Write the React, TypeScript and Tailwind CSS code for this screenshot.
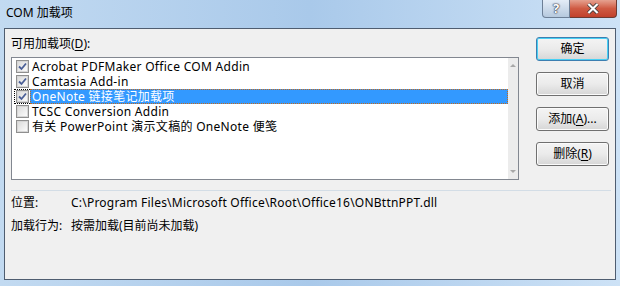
import React from "react";

const font = { fontFamily: '"Noto Sans", "Noto Sans CJK SC", sans-serif' };

const addins = [
  { name: "Acrobat PDFMaker Office COM Addin", checked: true },
  { name: "Camtasia Add-in", checked: true },
  { name: "OneNote 链接笔记加载项", checked: true, selected: true },
  { name: "TCSC Conversion Addin", checked: false },
  { name: "有关 PowerPoint 演示文稿的 OneNote 便笺", checked: false },
];

function CheckBox({ checked }: { checked: boolean }) {
  return (
    <div className="flex h-[13px] w-[13px] items-center justify-center border border-[#8f8f8f] bg-white">
      <div className="relative h-[11px] w-[11px] border border-[#d6d6d6] bg-gradient-to-br from-[#dcdcdc] to-[#fbfbfb]">
        {checked && (
          <svg viewBox="0 0 11 11" className="absolute -left-px -top-px h-[11px] w-[11px]">
            <path d="M2 5.5 L4.5 8 L9 2.5" fill="none" stroke="#4a5f97" strokeWidth="1.8" />
          </svg>
        )}
      </div>
    </div>
  );
}

function Button({ children, primary }: { children: React.ReactNode; primary?: boolean }) {
  return (
    <div
      className={`flex h-[24px] w-[73px] items-center justify-center rounded-[3px] border bg-gradient-to-b from-[#f4f4f4] via-[#ebebeb] to-[#d6d6d6] text-[12px] text-black ${
        primary ? "border-[#3c7fb1] shadow-[inset_0_0_0_1px_#48d0f4]" : "border-[#707070] shadow-[inset_0_0_0_1px_#fbfbfb]"
      }`}
    >
      {children}
    </div>
  );
}

export default function App() {
  return (
    <div
      className="flex h-[286px] w-[620px] flex-col overflow-hidden bg-gradient-to-r from-[#c2daf1] via-[#a9c9ea] to-[#cde2f6] text-[12px] text-black"
      style={font}
    >
      {/* title bar */}
      <div className="flex h-[28px] shrink-0 items-start">
        <div className="pl-[6px] pt-[5px] text-[12px] leading-[16px] text-black">COM 加载项</div>
        <div className="ml-auto mr-[3px] flex h-[18px]">
          <div className="flex w-[28px] items-center justify-center rounded-bl-[4px] border border-t-0 border-[#6d7f96] bg-gradient-to-b from-[#e4edf7] to-[#b6c9de] text-[13px] font-bold leading-none text-white [text-shadow:0_0_1px_#334,0_0_1px_#334,0_0_2px_#334]">
            ?
          </div>
          <div className="flex w-[47px] items-center justify-center rounded-br-[4px] border border-l-0 border-t-0 border-[#6d3a32] bg-gradient-to-b from-[#e5a190] via-[#cf5a43] to-[#c1412c]">
            <svg viewBox="0 0 14 12" className="h-[11px] w-[14px]">
              <path d="M2 1 L12 11 M12 1 L2 11" stroke="#3a3a3a" strokeWidth="4" />
              <path d="M2 1 L12 11 M12 1 L2 11" stroke="#ffffff" strokeWidth="2.4" />
            </svg>
          </div>
        </div>
      </div>

      {/* client area */}
      <div className="mx-[4px] h-[252px] border border-[#4f5d70] bg-[#f0f0f0] pl-[6px] pr-[4px]">
        <div className="flex">
          <div className="flex w-[508px] flex-col pt-[7px]">
            <div className="h-[16px] leading-[16px]">
              可用加载项(<span className="underline underline-offset-2">D</span>):
            </div>
            <div className="mt-[5px] flex h-[123px] border border-[#828790] bg-white">
              <div className="flex flex-1 flex-col pl-[2px] pt-px tracking-[0.3px]">
                {addins.map((a) =>
                  a.selected ? (
                    <div key={a.name} className="flex h-[15px] items-center">
                      <div className="flex h-[15px] w-[16px] items-center justify-center border border-r-0 border-dotted border-black">
                        <CheckBox checked={a.checked} />
                      </div>
                      <div className="flex h-[15px] flex-1 items-center border border-dotted border-[#c56a1a] bg-[#3399ff] pl-[1px] leading-[15px] text-white">
                        {a.name}
                      </div>
                    </div>
                  ) : (
                    <div key={a.name} className="flex h-[15px] items-center">
                      <div className="flex w-[16px] items-center justify-center">
                        <CheckBox checked={a.checked} />
                      </div>
                      <div className="pl-[2px] leading-[15px]">{a.name}</div>
                    </div>
                  )
                )}
              </div>
              <div className="flex w-[10px] flex-col items-center justify-between bg-[#ececec] py-[6px]">
                <div className="h-0 w-0 border-x-[3px] border-b-[3px] border-x-transparent border-b-[#a8a8a8]" />
                <div className="h-0 w-0 border-x-[3px] border-t-[3px] border-x-transparent border-t-[#a8a8a8]" />
              </div>
            </div>
          </div>
          <div className="ml-[17px] flex flex-col gap-[11px] pt-[8px]">
            <Button primary>确定</Button>
            <Button>取消</Button>
            <Button>
              添加(<span className="underline underline-offset-2">A</span>)...
            </Button>
            <Button>
              删除(<span className="underline underline-offset-2">R</span>)
            </Button>
          </div>
        </div>

        <div className="mt-[10px] h-px bg-[#d3dde6]" />

        <div className="mt-[4px] flex h-[16px] leading-[16px]">
          <div className="w-[60px]">位置:</div>
          <div className="tracking-[0.22px]">C:\Program Files\Microsoft Office\Root\Office16\ONBttnPPT.dll</div>
        </div>
        <div className="mt-[7px] flex h-[16px] leading-[16px]">
          <div className="w-[60px]">加载行为:</div>
          <div>按需加载(目前尚未加载)</div>
        </div>
      </div>
    </div>
  );
}
